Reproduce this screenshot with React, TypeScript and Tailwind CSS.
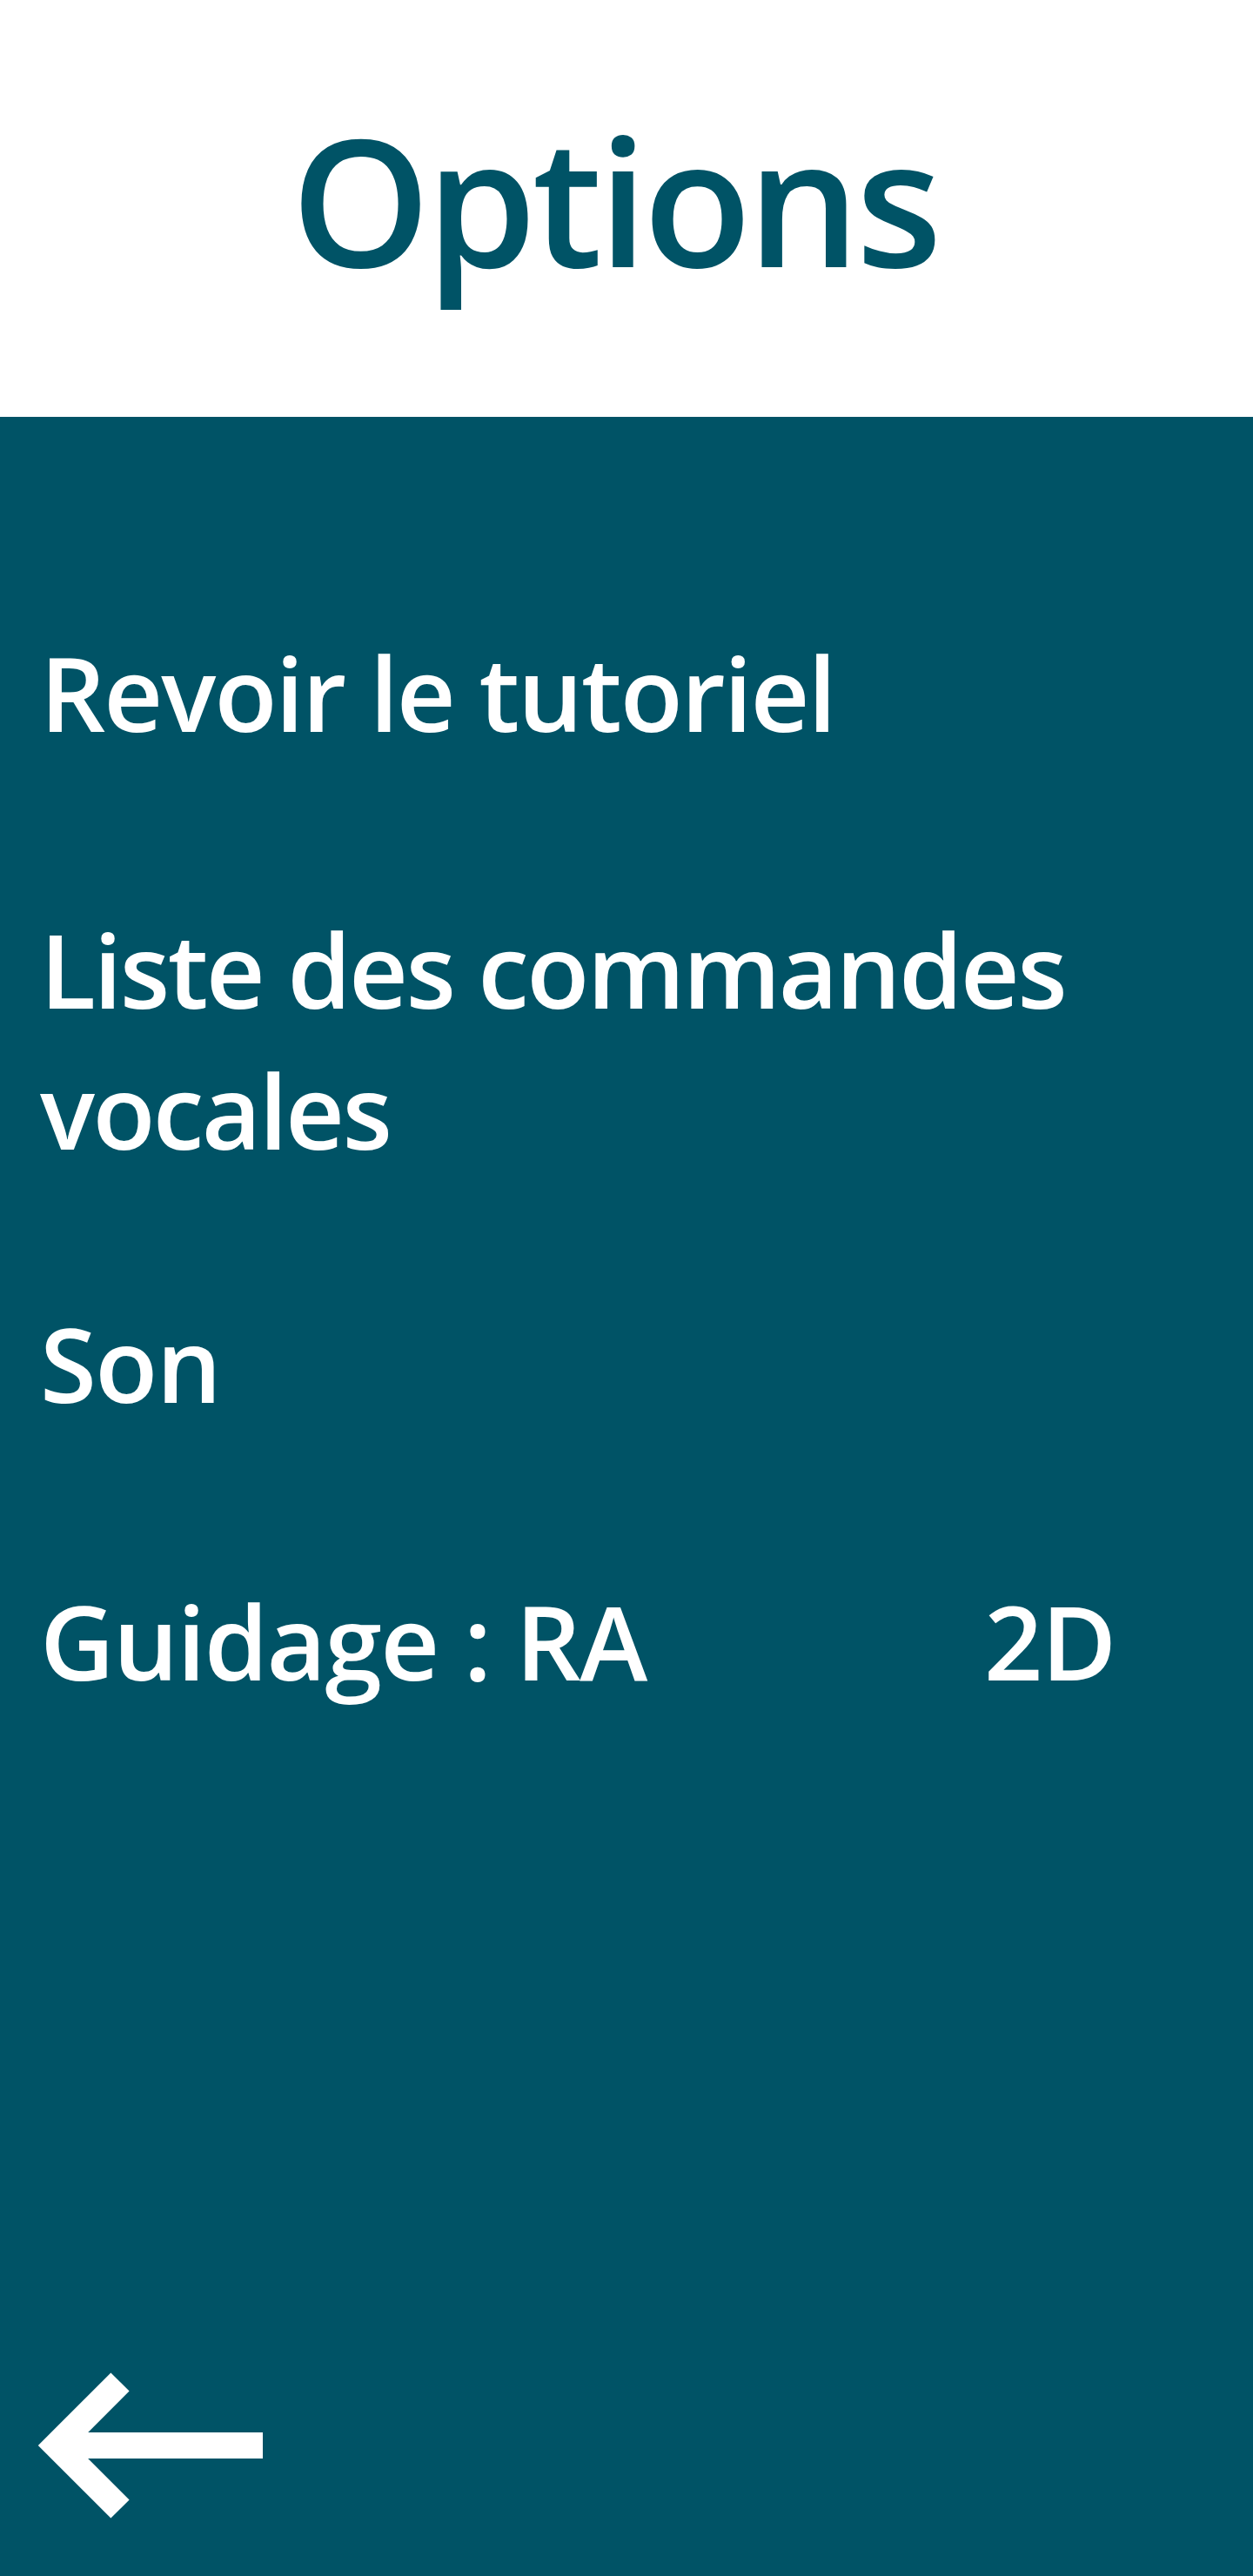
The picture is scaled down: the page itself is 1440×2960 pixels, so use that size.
import React from "react";

export default function App() {
  return (
    <div className="flex h-[2960px] w-full flex-col bg-[#005366] font-['Open_Sans',sans-serif]">
      {/* Header */}
      <div className="flex h-[479px] shrink-0 justify-center bg-white pr-[28px] pt-[126px]">
        <h1 className="text-[204px] font-semibold leading-none tracking-[-5px] text-[#005366]">Options</h1>
      </div>

      {/* Menu */}
      <div className="flex flex-1 flex-col pl-[46px] pt-[236px] text-[118px] font-semibold leading-[162px] tracking-[-1.6px] text-white">
        <button className="text-left tracking-[-2px]">Revoir le tutoriel</button>
        <button className="mt-[156px] text-left tracking-[-2.6px]">
          Liste des commandes
          <br />
          vocales
        </button>
        <button className="mt-[129px] text-left">Son</button>
        <div className="mt-[157px] flex">
          <span className="w-[1085px]">Guidage : RA</span>
          <span>2D</span>
        </div>

        {/* Back arrow */}
        <div className="mt-auto pb-[53px]">
          <svg width="270" height="190" viewBox="0 0 270 190" className="-ml-[8px]">
            <polyline
              points="100,20 27,93 100,166"
              fill="none"
              stroke="white"
              strokeWidth="30"
              strokeLinejoin="miter"
            />
            <line x1="30" y1="93" x2="264" y2="93" stroke="white" strokeWidth="30" />
          </svg>
        </div>
      </div>
    </div>
  );
}
